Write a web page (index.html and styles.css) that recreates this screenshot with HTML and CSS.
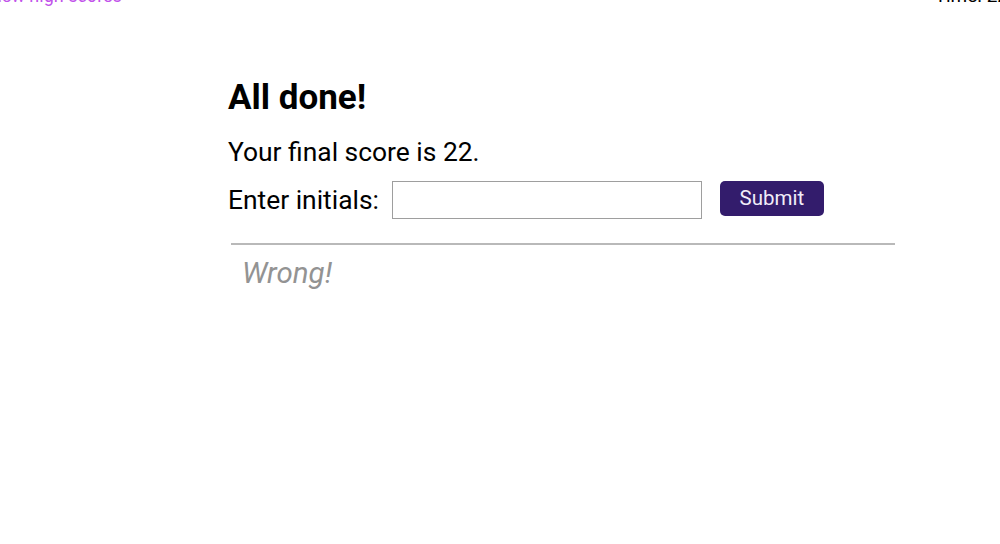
FILE: index.html
```html
<!DOCTYPE html>
<html lang="en">
<head>
<meta charset="utf-8">
<title>Quiz</title>
<link rel="stylesheet" href="styles.css">
</head>
<body>
<header class="topbar">
  <a class="scores-link" href="#">View high scores</a>
  <span class="timer">Time: 22</span>
</header>
<main class="quiz">
  <h1 class="title">All done!</h1>
  <p class="score">Your final score is 22.</p>
  <form class="entry">
    <label class="entry-label" for="initials">Enter initials:</label>
    <input class="entry-input" id="initials" type="text">
    <button class="entry-btn" type="button">Submit</button>
  </form>
  <div class="feedback">
    <p class="feedback-text">Wrong!</p>
  </div>
</main>
</body>
</html>
```
FILE: styles.css
```css
* { box-sizing: border-box; }
html, body { margin: 0; padding: 0; background: #fff; overflow: hidden; }
body {
  font-family: Roboto, "Liberation Sans", sans-serif;
  color: #000;
  width: 1000px;
  height: 544px;
}
.topbar {
  display: flex;
  justify-content: space-between;
  align-items: baseline;
  margin: -14px -8px 0 -14px;
  font-size: 18px;
  line-height: 20px;
}
.scores-link {
  color: #c152ea;
  text-decoration: none;
}
.timer { color: #000; font-size: 19px; }
.quiz {
  margin: 70px 0 0 228px;
  width: 667px;
}
.title {
  margin: 0;
  font-size: 35px;
  font-weight: 700;
  line-height: 44px;
}
.score {
  margin: 16px 0 0;
  font-size: 26.4px;
  line-height: 32px;
}
.entry {
  display: flex;
  align-items: flex-start;
  margin-top: 13px;
}
.entry-label {
  font-size: 26.4px;
  line-height: 38px;
  margin-right: 13px;
}
.entry-input {
  width: 310px;
  height: 38px;
  border: 1px solid #9e9e9e;
  border-radius: 0;
  font-size: 20px;
  padding: 0 6px;
  margin: 0;
}
.entry-btn {
  margin-left: 18px;
  width: 104px;
  height: 35px;
  border: none;
  border-radius: 5px;
  background: #331c6c;
  color: #f1ecf8;
  font-family: Roboto, "Liberation Sans", sans-serif;
  font-size: 20.5px;
  padding: 0;
  line-height: 35px;
}
.feedback {
  margin: 24px 0 0 3px;
  border-top: 2px solid #b9b9b9;
  width: 664px;
}
.feedback-text {
  margin: 10px 0 0 11px;
  font-size: 29.5px;
  line-height: 36px;
  font-style: italic;
  color: #939393;
}
```
